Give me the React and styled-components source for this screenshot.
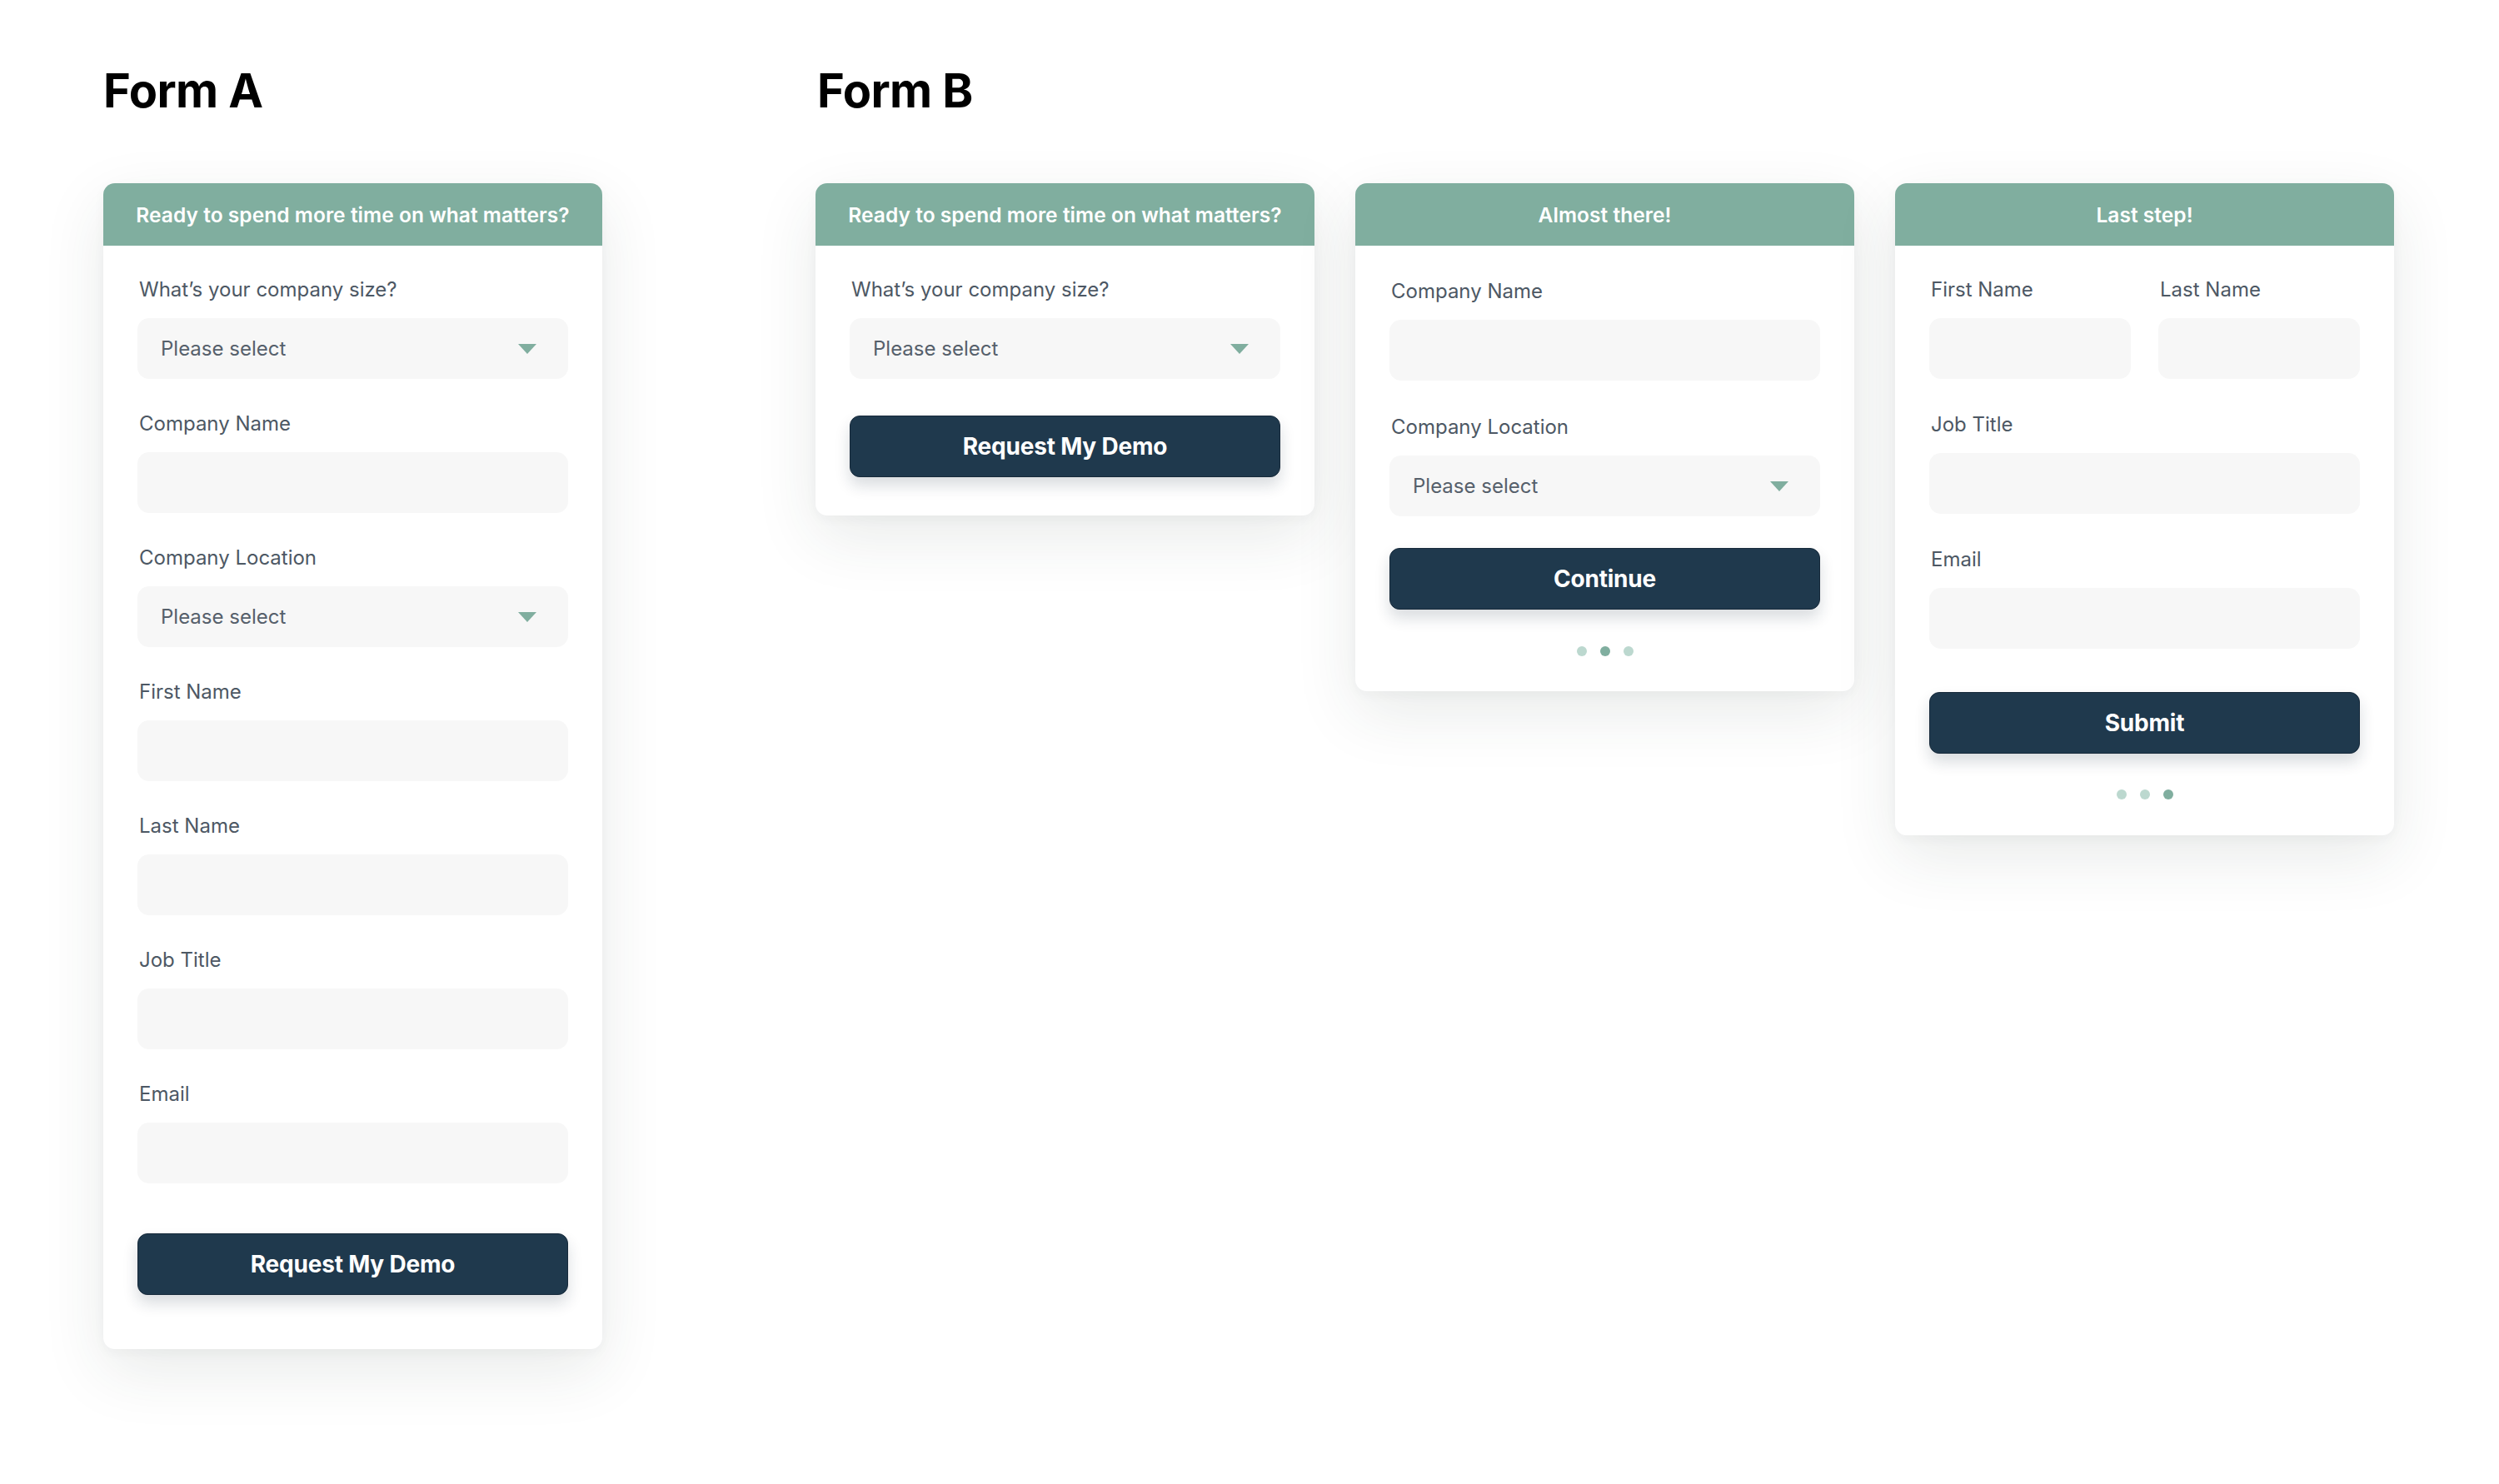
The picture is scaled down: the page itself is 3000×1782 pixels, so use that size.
import React from 'react';
import styled, { createGlobalStyle } from 'styled-components';

const GlobalStyle = createGlobalStyle`
  html, body {
    margin: 0;
    padding: 0;
    background: #ffffff;
  }
  body {
    font-family: Inter, "Noto Sans", "Liberation Sans", sans-serif;
    -webkit-font-smoothing: antialiased;
  }
`;

const colors = {
  green: '#80ae9f',
  greenLight: '#bcd8cf',
  navy: '#1f394d',
  field: '#f7f7f7',
  label: '#4d5864',
};

const Page = styled.main`
  display: flex;
  align-items: flex-start;
  gap: 256px;
  padding: 82px 0 0 124px;
  min-height: 1782px;
  box-sizing: border-box;
`;

const Section = styled.section`
  display: flex;
  flex-direction: column;
  gap: 84px;
`;

const Title = styled.h1`
  margin: 0 0 0 ${p => p.$indent || 0}px;
  font-size: 56px;
  line-height: 54px;
  font-weight: 700;
  color: #000;
  letter-spacing: -0.6px;
`;

const CardRow = styled.div`
  display: flex;
  align-items: flex-start;
  gap: 49px;
`;

const Card = styled.div`
  width: 599px;
  background: #fff;
  border-radius: 14px;
  overflow: hidden;
  box-shadow: 0 26px 76px rgba(40, 60, 50, 0.1), 0 4px 14px rgba(40, 60, 50, 0.04);
`;

const CardHeader = styled.header`
  height: 75px;
  background: ${colors.green};
  color: #fff;
  display: flex;
  align-items: center;
  justify-content: center;
  font-size: 24.5px;
  font-weight: 600;
  letter-spacing: 0.05px;
`;

const CardBody = styled.div`
  display: flex;
  flex-direction: column;
  padding: ${p => p.$top || 38}px 41px ${p => p.$bottom}px;
`;

const Stack = styled.div`
  display: flex;
  flex-direction: column;
  gap: ${p => p.$gap || 40}px;
`;

const Pair = styled.div`
  display: grid;
  grid-template-columns: 1fr 1fr;
  gap: 33px;
`;

const FieldWrap = styled.div`
  display: flex;
  flex-direction: column;
  gap: 19px;
`;

const Label = styled.label`
  font-size: 24px;
  line-height: 30px;
  color: ${colors.label};
  padding-left: 2px;
`;

const Box = styled.div`
  height: 73px;
  border-radius: 14px;
  background: ${colors.field};
  display: flex;
  align-items: center;
  justify-content: space-between;
  padding: 0 38px 0 28px;
  box-sizing: border-box;
  font-size: 24px;
  color: #56606b;
`;

const Caret = styled.svg`
  width: 22px;
  height: 12px;
  fill: ${colors.green};
`;

const Button = styled.button`
  margin-top: ${p => p.$top}px;
  height: 74px;
  width: 100%;
  border: 1px solid #16293a;
  border-radius: 12px;
  background: ${colors.navy};
  color: #fff;
  font-family: inherit;
  font-size: 28px;
  font-weight: 700;
  letter-spacing: -0.2px;
  box-shadow: 0 10px 18px rgba(20, 40, 55, 0.16);
  cursor: pointer;
`;

const Dots = styled.div`
  display: flex;
  justify-content: center;
  gap: 16px;
  margin-top: ${p => p.$top}px;
`;

const Dot = styled.span`
  width: 12px;
  height: 12px;
  border-radius: 50%;
  background: ${p => (p.$active ? colors.green : colors.greenLight)};
`;

const Field = ({ label, select }) => (
  <FieldWrap>
    <Label>{label}</Label>
    <Box>
      {select && (
        <>
          <span>Please select</span>
          <Caret viewBox="0 0 22 12">
            <path d="M0 0 H22 L11 12 Z" />
          </Caret>
        </>
      )}
    </Box>
  </FieldWrap>
);

const Steps = ({ active, top }) => (
  <Dots $top={top}>
    {[0, 1, 2].map(i => (
      <Dot key={i} $active={i === active} />
    ))}
  </Dots>
);

export default function App() {
  return (
    <>
      <GlobalStyle />
      <Page>
        <Section>
          <Title>Form A</Title>
          <Card>
            <CardHeader>Ready to spend more time on what matters?</CardHeader>
            <CardBody $bottom={65}>
              <Stack $gap={39}>
                <Field label="What’s your company size?" select />
                <Field label="Company Name" />
                <Field label="Company Location" select />
                <Field label="First Name" />
                <Field label="Last Name" />
                <Field label="Job Title" />
                <Field label="Email" />
              </Stack>
              <Button $top={60}>Request My Demo</Button>
            </CardBody>
          </Card>
        </Section>

        <Section>
          <Title $indent={2}>Form B</Title>
          <CardRow>
            <Card>
              <CardHeader>Ready to spend more time on what matters?</CardHeader>
              <CardBody $bottom={46}>
                <Field label="What’s your company size?" select />
                <Button $top={44}>Request My Demo</Button>
              </CardBody>
            </Card>

            <Card>
              <CardHeader>Almost there!</CardHeader>
              <CardBody $top={40} $bottom={42}>
                <Stack $gap={41}>
                  <Field label="Company Name" />
                  <Field label="Company Location" select />
                </Stack>
                <Button $top={38}>Continue</Button>
                <Steps active={1} top={44} />
              </CardBody>
            </Card>

            <Card>
              <CardHeader>Last step!</CardHeader>
              <CardBody $bottom={43}>
                <Stack $gap={40}>
                  <Pair>
                    <Field label="First Name" />
                    <Field label="Last Name" />
                  </Pair>
                  <Field label="Job Title" />
                  <Field label="Email" />
                </Stack>
                <Button $top={52}>Submit</Button>
                <Steps active={2} top={43} />
              </CardBody>
            </Card>
          </CardRow>
        </Section>
      </Page>
    </>
  );
}
